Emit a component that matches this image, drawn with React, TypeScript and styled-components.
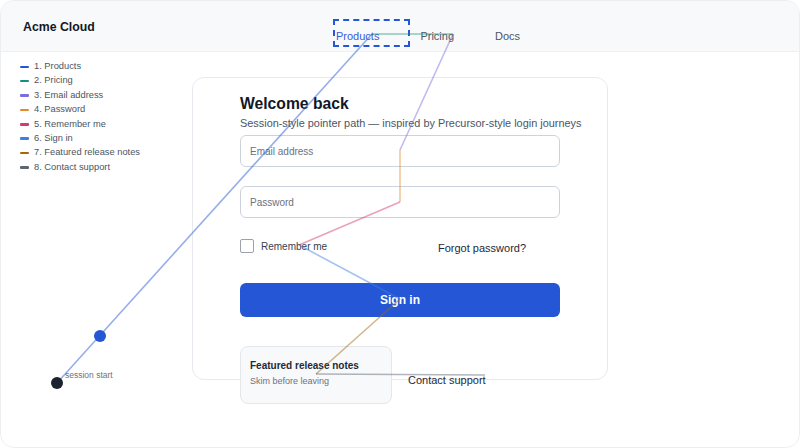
import React from "react";
import styled, { createGlobalStyle } from "styled-components";

type Step = { label: string; color: string; x: number; y: number };

// pointer trail, one stop per target in visit order
const steps: Step[] = [
  { label: "Products", color: "#2456d6", x: 372, y: 34 },
  { label: "Pricing", color: "#149273", x: 453, y: 34 },
  { label: "Email address", color: "#7b6ee0", x: 400, y: 150 },
  { label: "Password", color: "#e3892a", x: 400, y: 202 },
  { label: "Remember me", color: "#d23d6a", x: 299, y: 245 },
  { label: "Sign in", color: "#3f7fe0", x: 400, y: 299 },
  { label: "Featured release notes", color: "#a6660c", x: 316, y: 374 },
  { label: "Contact support", color: "#5f6673", x: 485, y: 375 },
];

const start = { x: 57, y: 383 };
const cursor = { x: 100, y: 336 };

function Trail() {
  let prev = start;
  return (
    <Overlay width={800} height={448} viewBox="0 0 800 448">
      {steps.map((s) => {
        const line = (
          <line
            key={s.label}
            x1={prev.x}
            y1={prev.y}
            x2={s.x}
            y2={s.y}
            stroke={s.color}
            strokeOpacity={0.48}
            strokeWidth={1.6}
          />
        );
        prev = s;
        return line;
      })}
      <circle cx={cursor.x} cy={cursor.y} r={6} fill="#2456d6" />
      <circle cx={start.x} cy={start.y} r={6} fill="#1c2330" />
      <text x={65} y={378} fontSize={8.5} fill="#6b7280" fontFamily="'Liberation Sans', Arial, sans-serif">
        session start
      </text>
    </Overlay>
  );
}

export default function App() {
  return (
    <>
      <GlobalStyle />
      <Frame>
        <Header>
          <Brand>Acme Cloud</Brand>
          <Nav>
            <NavLink active>Products</NavLink>
            <NavLink>Pricing</NavLink>
            <NavLink>Docs</NavLink>
          </Nav>
        </Header>
        <Body>
          <Legend>
            {steps.map((s, i) => (
              <LegendItem key={s.label}>
                <Swatch color={s.color} />
                {i + 1}. {s.label}
              </LegendItem>
            ))}
          </Legend>
          <Card>
            <Title>Welcome back</Title>
            <Subtitle>
              Session-style pointer path — inspired by Precursor-style login journeys
            </Subtitle>
            <Field placeholder="Email address" />
            <Field placeholder="Password" type="password" />
            <OptionsRow>
              <CheckLabel>
                <Box />
                Remember me
              </CheckLabel>
              <TextLink>Forgot password?</TextLink>
            </OptionsRow>
            <SignIn>Sign in</SignIn>
            <FooterRow>
              <Promo>
                <PromoTitle>Featured release notes</PromoTitle>
                <PromoText>Skim before leaving</PromoText>
              </Promo>
              <SupportLink>Contact support</SupportLink>
            </FooterRow>
          </Card>
        </Body>
        <TargetBox />
        <Trail />
      </Frame>
    </>
  );
}

const GlobalStyle = createGlobalStyle`
  body {
    margin: 0;
    background: #ffffff;
    font-family: "Liberation Sans", Arial, sans-serif;
  }
`;

const Frame = styled.div`
  position: relative;
  width: 800px;
  height: 448px;
  box-sizing: border-box;
  border: 1px solid #eceef1;
  border-radius: 14px;
  overflow: hidden;
  background: #ffffff;
`;

const Header = styled.header`
  display: grid;
  grid-template-columns: 335px 1fr;
  height: 51px;
  box-sizing: border-box;
  background: #f8f9fb;
  border-bottom: 1px solid #eef0f3;
`;

const Brand = styled.div`
  padding: 19px 0 0 22px;
  font-size: 12.3px;
  font-weight: 700;
  color: #111827;
`;

const Nav = styled.nav`
  display: flex;
  gap: 41px;
  padding-top: 29px;
`;

const NavLink = styled.span<{ active?: boolean }>`
  font-size: 11px;
  color: ${(p) => (p.active ? "#3a5bd9" : "#4b5563")};
`;

const TargetBox = styled.div`
  position: absolute;
  left: 332px;
  top: 18px;
  width: 77px;
  height: 28px;
  box-sizing: border-box;
  border: 2px dashed #2456d6;
`;

const Body = styled.div`
  display: grid;
  grid-template-columns: 191px 416px;
  align-items: start;
`;

const Legend = styled.ul`
  list-style: none;
  margin: 0;
  padding: 9px 0 0 19px;
  display: flex;
  flex-direction: column;
  gap: 2.9px;
`;

const LegendItem = styled.li`
  display: flex;
  align-items: center;
  gap: 5px;
  font-size: 9.3px;
  line-height: 11.5px;
  color: #4b5563;
`;

const Swatch = styled.span<{ color: string }>`
  width: 9px;
  height: 2.5px;
  border-radius: 1px;
  background: ${(p) => p.color};
`;

const Card = styled.section`
  margin-top: 25px;
  height: 303px;
  box-sizing: border-box;
  padding: 15px 0 0 47px;
  border: 1px solid #e6e9ee;
  border-radius: 12px;
  display: flex;
  flex-direction: column;

  & > * {
    flex-shrink: 0;
  }
`;

const Title = styled.h1`
  margin: 0;
  font-size: 15.7px;
  font-weight: 700;
  color: #111827;
  line-height: 22px;
`;

const Subtitle = styled.p`
  margin: 1px 0 5px;
  font-size: 10.9px;
  color: #4b5563;
  line-height: 14px;
`;

const Field = styled.input`
  width: 320px;
  height: 32px;
  box-sizing: border-box;
  margin-bottom: 19px;
  padding: 0 9px;
  border: 1.5px solid #cdd3dc;
  border-radius: 6px;
  font-family: inherit;
  font-size: 10px;
  background: #fff;
  &::placeholder {
    color: #6b7280;
  }
`;

const OptionsRow = styled.div`
  display: grid;
  grid-template-columns: 198px auto;
  align-items: center;
  width: 320px;
  margin-top: 1px;
`;

const CheckLabel = styled.label`
  display: flex;
  align-items: center;
  gap: 7px;
  font-size: 10px;
  color: #374151;
`;

const Box = styled.span`
  width: 14px;
  height: 14px;
  box-sizing: border-box;
  border: 1.5px solid #9aa1ad;
  border-radius: 2px;
  background: #fff;
`;

const TextLink = styled.span`
  font-size: 11px;
  color: #1f2937;
  margin-top: 4px;
`;

const SignIn = styled.button`
  margin-top: 29px;
  width: 320px;
  height: 34px;
  border: none;
  border-radius: 6px;
  background: #2456d6;
  color: #ffffff;
  font-family: inherit;
  font-size: 12px;
  font-weight: 700;
`;

const FooterRow = styled.div`
  display: flex;
  align-items: center;
  gap: 16px;
  margin-top: 29px;
`;

const Promo = styled.div`
  position: relative;
  width: 152px;
  height: 58px;
  box-sizing: border-box;
  padding: 12px 0 0 9px;
  background: #f8f9fb;
  border: 1px solid #e3e6ea;
  border-radius: 8px;
`;

const PromoTitle = styled.div`
  font-size: 10px;
  font-weight: 700;
  color: #1f2937;
  line-height: 13px;
`;

const PromoText = styled.div`
  margin-top: 3px;
  font-size: 9px;
  color: #6b7280;
  line-height: 12px;
`;

const SupportLink = styled.span`
  margin-top: 10px;
  font-size: 11px;
  color: #1f2937;
`;

const Overlay = styled.svg`
  position: absolute;
  left: -1px;
  top: -1px;
  pointer-events: none;
`;
